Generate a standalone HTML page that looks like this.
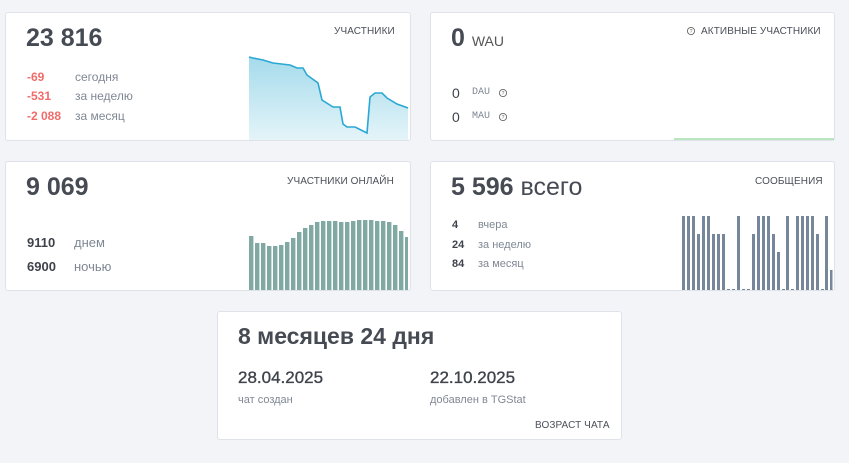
<!DOCTYPE html>
<html><head><meta charset="utf-8"><style>
body{margin:0;width:849px;height:463px;background:#f3f4f8;font-family:"Liberation Sans",sans-serif;position:relative;overflow:hidden;color:#464b55}
.card{position:absolute;background:#fff;border:1px solid #dfe2e8;border-radius:3px;box-sizing:border-box}
.a{position:absolute;white-space:nowrap}
.big{font-size:25px;font-weight:bold;color:#454a53}
.lbl{font-size:10px;color:#4a4f58;letter-spacing:.1px}
.g{color:#7f8894;font-size:12px}
.r{color:#f26b6b;font-weight:bold;font-size:12px}
.n{font-weight:bold;font-size:12px;color:#3e434b}
svg{position:absolute;left:0;top:0}
</style></head><body>
<div class="card" style="left:5px;top:12px;width:406px;height:129px"></div>
<div class="card" style="left:430px;top:12px;width:405px;height:129px"></div>
<div class="card" style="left:5px;top:161px;width:406px;height:130px"></div>
<div class="card" style="left:430px;top:161px;width:405px;height:130px"></div>
<div class="card" style="left:217px;top:311px;width:405px;height:129px"></div>

<svg width="849" height="463">
<defs><linearGradient id="gr" x1="0" y1="0" x2="0" y2="1"><stop offset="0" stop-color="#a5dbeb"/><stop offset="1" stop-color="#e4f4f9"/></linearGradient></defs>
<path d="M249,57 L253,58 263,60 273,63 290,65 297,68 303,68 307,75 318,83 322,100 333,107 340,107 343,124 347,127 355,127 367,133 370,97 375,93 382,93 387,98 397,104 408,108 L408,140 249,140Z" fill="url(#gr)"/>
<polyline points="249,57 253,58 263,60 273,63 290,65 297,68 303,68 307,75 318,83 322,100 333,107 340,107 343,124 347,127 355,127 367,133 370,97 375,93 382,93 387,98 397,104 408,108" fill="none" stroke="#2aa8d4" stroke-width="1.6"/>
<line x1="674" y1="139" x2="834" y2="139" stroke="#8fd69a" stroke-width="1.2"/>
<g fill="#7fa9a2">
<rect x="249" y="236" width="4.4" height="54"/><rect x="255" y="243" width="4.4" height="47"/><rect x="261" y="243" width="4.4" height="47"/><rect x="267" y="246" width="4.4" height="44"/><rect x="273" y="246" width="4.4" height="44"/><rect x="279" y="245" width="4.4" height="45"/><rect x="285" y="242" width="4.4" height="48"/><rect x="291" y="238" width="4.4" height="52"/><rect x="297" y="232" width="4.4" height="58"/><rect x="303" y="228" width="4.4" height="62"/><rect x="309" y="225" width="4.4" height="65"/><rect x="315" y="222" width="4.4" height="68"/><rect x="321" y="221" width="4.4" height="69"/><rect x="327" y="221" width="4.4" height="69"/><rect x="333" y="221" width="4.4" height="69"/><rect x="339" y="222" width="4.4" height="68"/><rect x="345" y="222" width="4.4" height="68"/><rect x="351" y="221" width="4.4" height="69"/><rect x="357" y="220" width="4.4" height="70"/><rect x="363" y="220" width="4.4" height="70"/><rect x="369" y="220" width="4.4" height="70"/><rect x="375" y="221" width="4.4" height="69"/><rect x="381" y="221" width="4.4" height="69"/><rect x="387" y="222" width="4.4" height="68"/><rect x="393" y="225" width="4.4" height="65"/><rect x="399" y="231" width="4.4" height="59"/><rect x="405" y="237" width="3" height="53"/>
</g>
<g fill="#76879b">
<rect x="682" y="216" width="3" height="74"/><rect x="687" y="216" width="3" height="74"/><rect x="692" y="216" width="3" height="74"/><rect x="697" y="234" width="3" height="56"/><rect x="702" y="216" width="3" height="74"/><rect x="707" y="216" width="3" height="74"/><rect x="712" y="234" width="3" height="56"/><rect x="717" y="234" width="3" height="56"/><rect x="722" y="234" width="3" height="56"/><rect x="727" y="289" width="3" height="1"/><rect x="732" y="289" width="3" height="1"/><rect x="737" y="216" width="3" height="74"/><rect x="742" y="289" width="3" height="1"/><rect x="747" y="289" width="3" height="1"/><rect x="752" y="234" width="3" height="56"/><rect x="757" y="216" width="3" height="74"/><rect x="762" y="216" width="3" height="74"/><rect x="767" y="216" width="3" height="74"/><rect x="772" y="234" width="3" height="56"/><rect x="777" y="252" width="3" height="38"/><rect x="782" y="289" width="3" height="1"/><rect x="786" y="216" width="3" height="74"/><rect x="791" y="289" width="3" height="1"/><rect x="796" y="216" width="3" height="74"/><rect x="801" y="216" width="3" height="74"/><rect x="806" y="216" width="3" height="74"/><rect x="811" y="216" width="3" height="74"/><rect x="816" y="234" width="3" height="56"/><rect x="821" y="289" width="3" height="1"/><rect x="825" y="216" width="3" height="74"/><rect x="830" y="270" width="2.5" height="20"/>
</g>
<g fill="none" stroke="#666" stroke-width="0.9"><circle cx="691" cy="31" r="3.6"/><circle cx="503" cy="93" r="3.6"/><circle cx="503" cy="117" r="3.6"/></g>
<g fill="#666" font-size="5" font-family="Liberation Sans" text-anchor="middle"><text x="691" y="33">?</text><text x="503" y="95">?</text><text x="503" y="119">?</text></g>
</svg>

<div class="a big" style="left:26px;top:24px">23 816</div>
<div class="a lbl" style="left:334px;top:26px">УЧАСТНИКИ</div>
<div class="a r" style="left:27px;top:70px">-69</div><div class="a g" style="left:75px;top:70px">сегодня</div>
<div class="a r" style="left:27px;top:89px">-531</div><div class="a g" style="left:75px;top:89px">за неделю</div>
<div class="a r" style="left:27px;top:109px">-2 088</div><div class="a g" style="left:75px;top:109px">за месяц</div>

<div class="a big" style="left:451px;top:24px">0 <span style="font-size:14px;font-weight:normal;color:#555">WAU</span></div>
<div class="a lbl" style="left:701px;top:26px">АКТИВНЫЕ УЧАСТНИКИ</div>
<div class="a" style="left:452px;top:85px;font-size:14px;color:#3e434b">0</div><div class="a" style="left:472px;top:87px;font-size:10px;font-family:'Liberation Mono',monospace;color:#7f8894">DAU</div>
<div class="a" style="left:452px;top:109px;font-size:14px;color:#3e434b">0</div><div class="a" style="left:472px;top:111px;font-size:10px;font-family:'Liberation Mono',monospace;color:#7f8894">MAU</div>

<div class="a big" style="left:26px;top:173px">9 069</div>
<div class="a lbl" style="left:287px;top:176px">УЧАСТНИКИ ОНЛАЙН</div>
<div class="a n" style="left:27px;top:235px;font-size:13px">9110</div><div class="a g" style="left:74px;top:235px;font-size:13px">днем</div>
<div class="a n" style="left:27px;top:259px;font-size:13px">6900</div><div class="a g" style="left:74px;top:259px;font-size:13px">ночью</div>

<div class="a big" style="left:451px;top:173px">5 596 <span style="font-weight:normal">всего</span></div>
<div class="a lbl" style="left:755px;top:176px">СООБЩЕНИЯ</div>
<div class="a n" style="left:452px;top:219px;font-size:11px">4</div><div class="a g" style="left:478px;top:219px;font-size:11px">вчера</div>
<div class="a n" style="left:452px;top:239px;font-size:11px">24</div><div class="a g" style="left:478px;top:239px;font-size:11px">за неделю</div>
<div class="a n" style="left:452px;top:258px;font-size:11px">84</div><div class="a g" style="left:478px;top:258px;font-size:11px">за месяц</div>

<div class="a big" style="left:238px;top:323px;font-size:23px">8 месяцев 24 дня</div>
<div class="a" style="left:238px;top:368px;font-size:17px;color:#3e434b;-webkit-text-stroke:0.35px #3e434b">28.04.2025</div>
<div class="a g" style="left:238px;top:394px;font-size:11px">чат создан</div>
<div class="a" style="left:430px;top:368px;font-size:17px;color:#3e434b;-webkit-text-stroke:0.35px #3e434b">22.10.2025</div>
<div class="a g" style="left:430px;top:394px;font-size:11px">добавлен в TGStat</div>
<div class="a lbl" style="left:535px;top:420px">ВОЗРАСТ ЧАТА</div>
</body></html>
